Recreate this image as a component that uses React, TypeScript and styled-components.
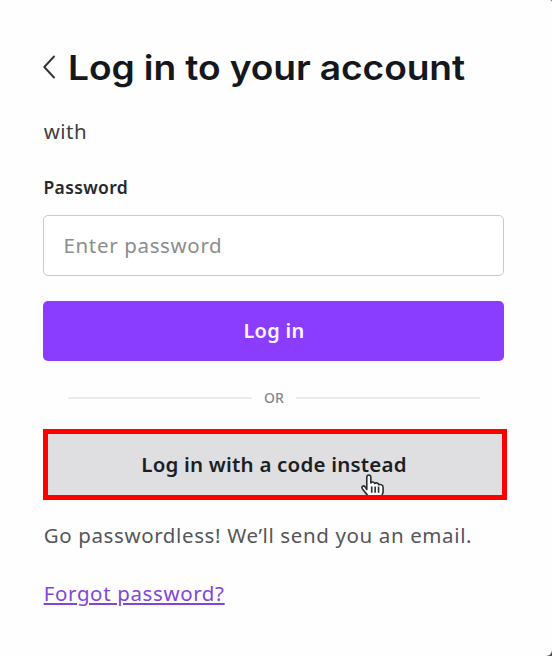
import React from "react";
import styled, { createGlobalStyle } from "styled-components";

const GlobalStyle = createGlobalStyle`
  * { box-sizing: border-box; }
  body { margin: 0; background: #55504b; font-family: "Noto Sans", sans-serif; }
`;

const Card = styled.main`
  display: flex;
  flex-direction: column;
  width: 552px;
  height: 656px;
  padding: 46px 48px 0 43px;
  background: #fefefe;
  border-radius: 0 2px 6px 0;
  overflow: hidden;
`;

const Header = styled.header`
  display: flex;
  align-items: center;
  height: 44px;
`;

const BackButton = styled.button`
  display: flex;
  width: 25px;
  height: 44px;
  padding: 8px 0 0;
  border: 0;
  background: none;
`;

const Title = styled.h1`
  margin: 0;
  color: #14171b;
  font: 620 34px/44px Inter, sans-serif;
  letter-spacing: -0.1px;
  white-space: nowrap;
  transform: scaleX(1.093);
  transform-origin: left;
`;

const Text = styled.p<{ $top: number; $spacing: string; $color?: string }>`
  margin: ${(p) => p.$top}px 0 0;
  padding-left: 0.7px;
  color: ${(p) => p.$color ?? "#3d4046"};
  font-size: 20.5px;
  line-height: 30px;
  letter-spacing: ${(p) => p.$spacing};
  white-space: nowrap;
`;

const Label = styled.label`
  margin-top: 29px;
  padding-left: 0.5px;
  color: #25282d;
  font-size: 17.5px;
  font-weight: 600;
  line-height: 24px;
  letter-spacing: 0.35px;
`;

const Input = styled.input`
  width: 461px;
  height: 61px;
  margin-top: 16px;
  padding: 0 19.5px 2px;
  border: 1.5px solid #c9cacc;
  border-radius: 5px;
  background: #fff;
  outline: 0;
  font: 400 20.5px "Noto Sans", sans-serif;
  letter-spacing: 0.65px;
  &::placeholder { color: #8b8d90; opacity: 1; }
`;

const Button = styled.button`
  height: 60px;
  width: 461px;
  margin-top: 25px;
  padding: 0 0 2px 1px;
  border: 0;
  border-radius: 5px;
  background: #8b3dff;
  color: #fbf7ff;
  font: 600 20px "Noto Sans", sans-serif;
  letter-spacing: 0.3px;
`;

const Divider = styled.div`
  display: flex;
  align-items: center;
  gap: 12px;
  width: 412px;
  height: 20px;
  margin: 27px 0 0 25px;
  color: #85878a;
  font-size: 14px;
  font-weight: 500;
  line-height: 18px;
  padding-bottom: 1px;
  &::before, &::after {
    content: "";
    flex: 1;
    height: 2px;
    background: #ebebec;
  }
`;

const CodeButton = styled.button`
  position: relative;
  width: 464px;
  height: 71px;
  margin-top: 21px;
  padding: 0 2px 2px 0;
  border: 5px solid #ff0000;
  background: #dfdfe1;
  overflow: hidden;
  color: #1b1e23;
  font: 600 20.5px "Noto Sans", sans-serif;
  letter-spacing: 0.2px;
`;

const Cursor = styled.svg`
  position: absolute;
  left: 312px;
  top: 39px;
`;

const ForgotLink = styled.a`
  align-self: flex-start;
  margin: 28px 0 0 0.7px;
  color: #8146d8;
  font-size: 20.5px;
  line-height: 30px;
  letter-spacing: 0.63px;
  text-decoration: underline;
  text-decoration-thickness: 1.5px;
  text-underline-offset: 2px;
  white-space: nowrap;
`;

export default function App() {
  return (
    <>
      <GlobalStyle />
      <Card>
        <Header>
          <BackButton aria-label="Back">
            <svg width="14" height="26" viewBox="0 0 14 26" fill="none">
              <path d="M11 2.5 1.3 13 11 23.5" stroke="#303338" strokeWidth="1.9" strokeLinecap="round" strokeLinejoin="round" />
            </svg>
          </BackButton>
          <Title>Log in to your account</Title>
        </Header>
        <Text $top={26} $spacing="0.5px">with</Text>
        <Label htmlFor="password">Password</Label>
        <Input id="password" type="password" placeholder="Enter password" />
        <Button>Log in</Button>
        <Divider>OR</Divider>
        <CodeButton>
          Log in with a code instead
          <Cursor width="26" height="30" viewBox="0 0 24 28">
            <path
              d="M6.2 15.5V4.2C6.2 1 10 1 10 4.2V9.3C11 7.8 13 8.2 13.5 9.8C15 8.7 17 9.3 17.4 11C19.5 10.2 21.4 11.3 21.4 13.5V17.5C21.4 20 19.5 21 19.2 24.2H8.5C8.2 21 4.7 18.8 2.2 14.8C.8 12.4 3.2 11.2 4.7 13Z"
              fill="#fff" stroke="#292c30" strokeWidth="1.5" strokeLinejoin="round"
            />
            <path d="M10.8 12.5V18.5M14 12.5V18.5M17.2 12.5V18.5" stroke="#292c30" strokeWidth="1.5" />
          </Cursor>
        </CodeButton>
        <Text $top={20} $spacing="0.62px" $color="#54565a">Go passwordless! We’ll send you an email.</Text>
        <ForgotLink href="#">Forgot password?</ForgotLink>
      </Card>
    </>
  );
}
